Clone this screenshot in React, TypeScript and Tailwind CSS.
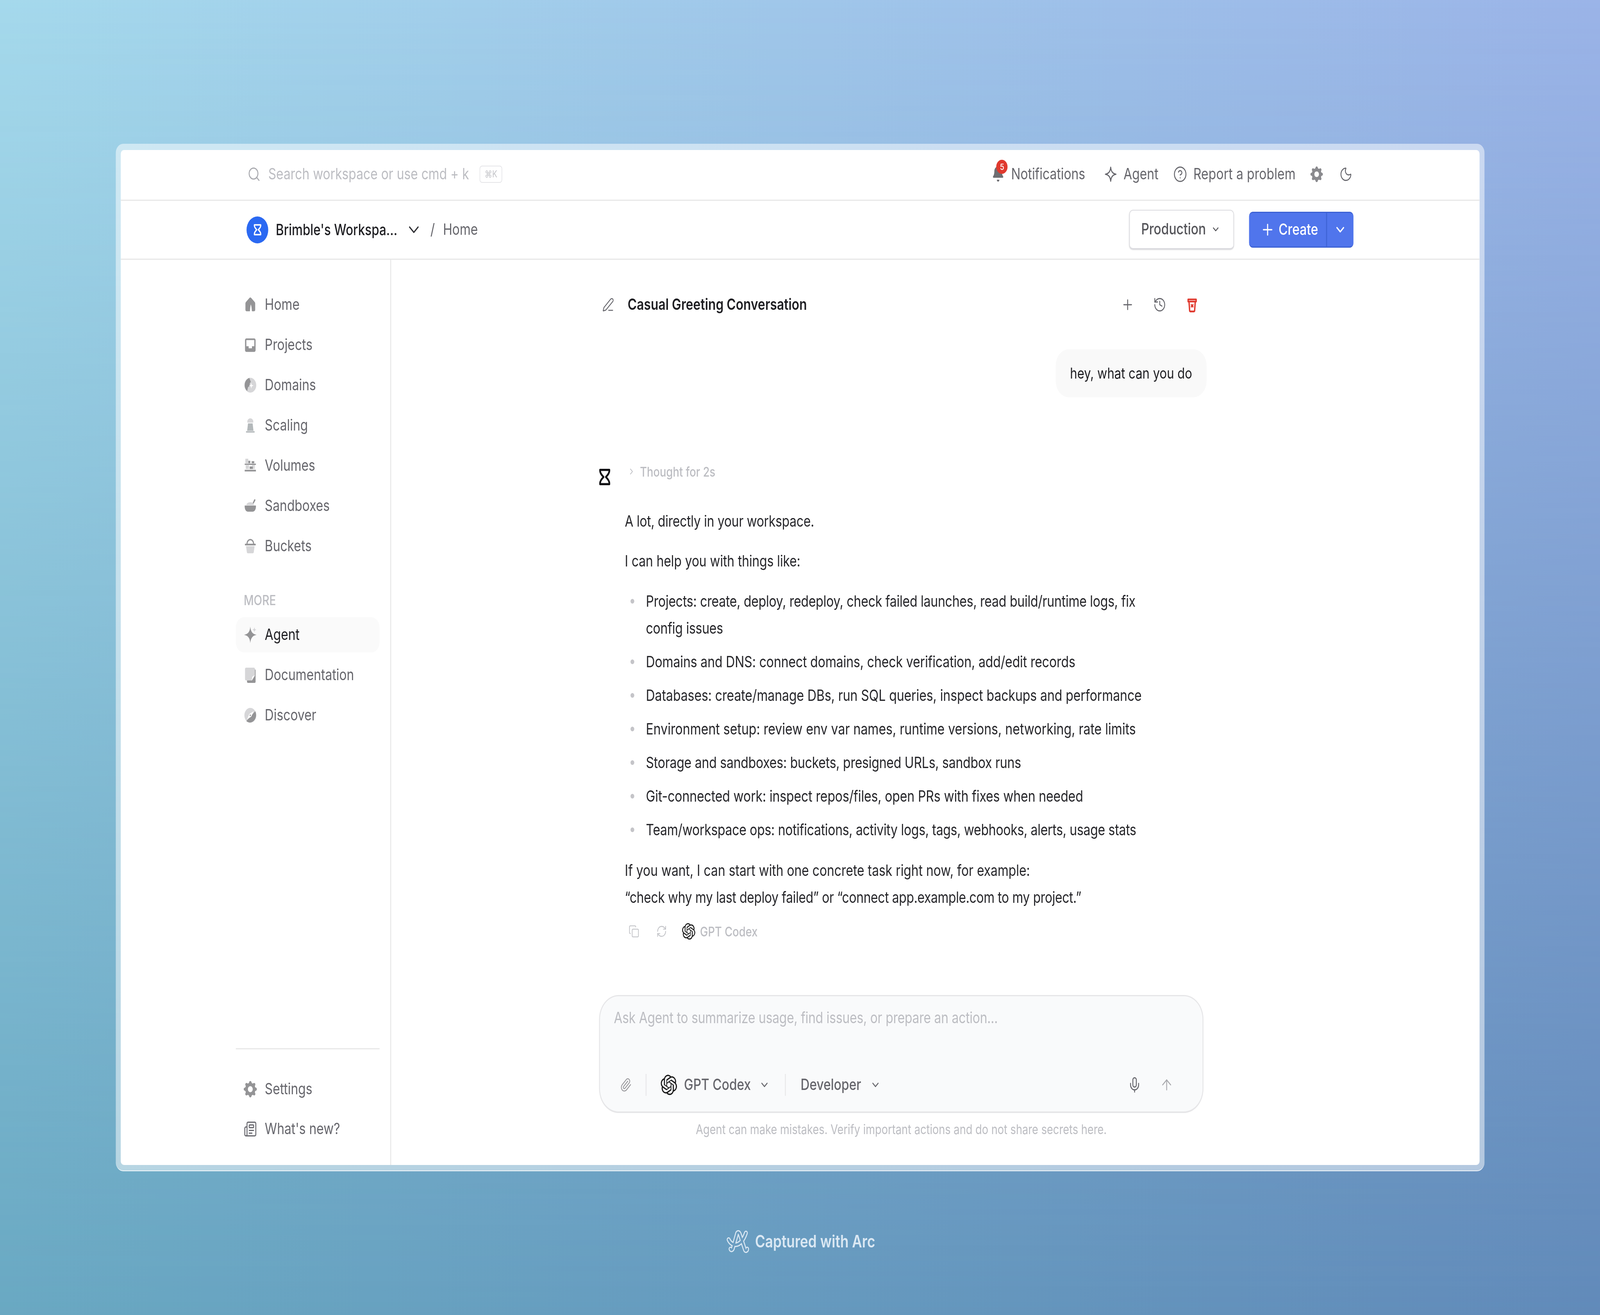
import React from "react";
import { Search, ChevronDown, ChevronRight, Plus, History, CircleHelp, Moon, Newspaper, Copy, RefreshCw, Paperclip, Mic, ArrowUp, PenLine } from "lucide-react";
import { SiOpenai } from "react-icons/si";
import { BsGearFill } from "react-icons/bs";

const D = "#949496";
const L = "#d6d6d8";

const HomeIcon = () => (
  <svg viewBox="0 0 20 20" className="w-[42px] h-[42px]"><path fill={D} d="M10 1.2c.5 0 1 .2 1.5.7l5 4.6c.6.6.9 1.2.9 2.1v7.6c0 1-.8 1.8-1.8 1.8h-2.8c-.3 0-.5-.2-.5-.5-.1-3.3-.6-5.8-1.6-8-.6 2.3-1.1 5-1.2 8 0 .3-.2.5-.5.5H4.400c-1 0-1.800-.8-1.800-1.800V8.600c0-.9.300-1.500.900-2.100l5-4.600c.5-.5 1-.7 1.500-.7z" /></svg>
);
const ProjectsIcon = () => (
  <svg viewBox="0 0 20 20" className="w-[42px] h-[42px]"><rect x="2" y="2" width="16" height="16.500" rx="2.200" fill={D} /><path fill="#fff" d="M4 4h12v7.500h-3.500V14h-5v-2.500H4z" /></svg>
);
const DomainsIcon = () => (
  <svg viewBox="0 0 20 20" className="w-[44px] h-[44px]"><circle cx="10" cy="10" r="9" fill={L} /><path fill={D} d="M8.500 1.200C4.800 2 1.500 5.200 1.500 10c0 3 1.500 5.500 3.800 7l1.200-4.500 2.300-1.500.5-3.500 1.500-1.500z" /><path fill="#fff" d="M11.500 7l.8 2.700 2.700.8-2.700.8-.8 2.700-.8-2.700-2.700-.8 2.700-.8z" /></svg>
);
const ScalingIcon = () => (
  <svg viewBox="0 0 20 20" className="w-[42px] h-[42px]"><path fill={L} d="M5.500 5C5.500 3 8 1.300 10 1.300S14.500 3 14.500 5v1.500h-9z" /><path fill="#b3b8ba" d="M6.500 7.500h7l1.300 9h-9.600zM3.500 17h13v1.700h-13z" /></svg>
);
const VolumesIcon = () => (
  <svg viewBox="0 0 20 20" className="w-[44px] h-[44px]"><path fill={L} d="M2.500 1.500h4.500v5.500H2.500zM3 9.500h5v4.500H3z" /><path fill={D} d="M7 4h3v3H7zM12 4.500h4V7h-4zM9 11h5v3H9zM1.500 7.500h17v1.500h-17zM1.500 15h17v2h-17z" /><path fill="#b9b9bb" d="M12 9h5v5h-3z" opacity=".5" /></svg>
);
const SandboxIcon = () => (
  <svg viewBox="0 0 20 20" className="w-[44px] h-[44px]"><path fill={L} d="M4 9c0-2 3-3.500 6-3.500 1.500 0 3 .3 4 1l2 2.500z" /><path fill={D} d="M1.500 9.500h17c.3 3.500-1 7-4.500 7.500H6C2.500 16.500 1.200 13 1.500 9.500zM13.500 6.500l2.200-4c.3-.6 1.300-.8 1.800-.3.4.400.300 1-.1 1.500L15 7.300z" /></svg>
);
const BucketIcon = () => (
  <svg viewBox="0 0 20 20" className="w-[42px] h-[42px]"><path fill="none" stroke={D} strokeWidth="1.700" d="M5 7.500C5 4 7.500 2 10 2s5 2 5 5.500" /><rect x="1.800" y="7" width="16.400" height="2" rx=".6" fill={D} /><path fill={L} d="M3.500 10h13l-1.300 7.500c-.1.700-.7 1.200-1.500 1.200H6.300c-.8 0-1.400-.5-1.500-1.200z" /></svg>
);
const AgentIcon = () => (
  <svg viewBox="0 0 42 42" className="w-[42px] h-[44px]"><path fill={D} d="M21 0C22.500 13 28 19 41 21 28 23 22.500 29 21 42 19.500 29 14 23 1 21 14 19 19.500 13 21 0z" /><path fill={L} d="M34 1c.6 4.500 2.500 6.400 7 7-4.500.6-6.400 2.500-7 7-.6-4.500-2.500-6.400-7-7 4.500-.6 6.400-2.500 7-7z" /></svg>
);
const DocIcon = () => (
  <svg viewBox="0 0 20 20" className="w-[42px] h-[46px]"><rect x="5" y="3" width="13" height="16.500" rx="1.500" fill={D} /><path fill={L} d="M3.500 1h12c.8 0 1.500.7 1.500 1.500V11l-4.500 5.500h-9c-.8 0-1.500-.7-1.500-1.500V2.500C2 1.700 2.700 1 3.500 1z" /><path fill="#fff" d="M12 17l1-5 3.500-2z" /></svg>
);
const DiscoverIcon = () => (
  <svg viewBox="0 0 20 20" className="w-[42px] h-[46px]"><circle cx="10" cy="10" r="9" fill={L} /><path fill={D} d="M17.500 5c2 3.500 1.600 7.500-1 10.500C13.500 19 8 20 4 17z" /><path fill="#fff" d="M15 5l-3.500 6.500L5 15l3.500-6.500z" /><circle cx="10" cy="10" r="1" fill={D} /></svg>
);
const Hourglass = ({ className, color }: { className: string; color: string }) => (
  <svg viewBox="0 0 20 24" className={className} fill="none"><path stroke={color} strokeWidth="3" strokeLinejoin="round" d="M2 2h16v1.500c0 3-3 6-6 8.500 3 2.500 6 5.500 6 8.500V22H2v-1.500c0-3 3-6 6-8.500-3-2.500-6-5.500-6-8.500z" /></svg>
);
const ArcLogo = () => (
  <svg viewBox="0 0 74 62" className="w-[74px] h-[62px]" fill="none" strokeLinecap="round">
    <path stroke="#dbe8f3" strokeWidth="12" d="M14 50c2 4 7 2 8-3l12-34c1-6 6-7 9-2l17 41c2 4 7 2 7-2" />
    <path stroke="#dbe8f3" strokeWidth="12" d="M8 26c10 18 38 22 55-17" />
    <path stroke="#6b9dc1" strokeWidth="6" d="M14 50c2 4 7 2 8-3l12-34c1-6 6-7 9-2l17 41c2 4 7 2 7-2" />
    <path stroke="#6b9dc1" strokeWidth="6" d="M8 26c10 18 38 22 55-17" />
  </svg>
);

const Item = ({ icon, label, active }: { icon: React.ReactNode; label: string; active?: boolean }) => (
  <div className={`flex h-[90px] items-center rounded-[26px] pl-[25px] ${active ? "bg-[#fafafa] text-[#1e1e22]" : "text-[#66666c]"}`}>
    <div className="flex w-[42px] items-center justify-center">{icon}</div>
    <span className="ml-[25px]">{label}</span>
  </div>
);

const Li = ({ children, className = "" }: { children: React.ReactNode; className?: string }) => (
  <li className={`relative whitespace-nowrap pl-[67px] before:absolute before:left-[18px] before:top-[29px] before:h-[12px] before:w-[12px] before:rounded-full before:bg-[#c4c4c8] ${className}`}>{children}</li>
);

export default function App() {
  return (
    <div className="h-[3366px] w-full overflow-hidden">
      <div className="relative h-[3366px] w-[5088px] origin-top-left scale-x-[0.80503] overflow-hidden bg-[linear-gradient(to_right,#a5d9ec,#9bb4e8)] pl-[368px] pt-[368px] text-[39.5px] [font-family:Inter,'DejaVu_Sans',sans-serif] before:absolute before:inset-0 before:bg-[linear-gradient(to_right,#69a8c2,#618ab9)] before:[mask-image:linear-gradient(to_bottom,transparent,black)]">
        <div className="relative h-[2630px] w-[4353px] rounded-[24px] border-b-[2px] border-b-white/80 bg-white/50 p-[16px]">
          <div className="flex h-[2598px] w-[4321px] flex-col overflow-hidden rounded-[10px] bg-white">
            {/* top bar */}
            <div className="flex h-[130px] shrink-0 items-center justify-between border-b-[3px] border-[#e8e8e8] pb-[3px] pl-[403px] pr-[404px]">
              <div className="flex items-center text-[#bcbdc2]">
                <Search className="h-[42px] w-[42px]" strokeWidth={1.7} color="#a9aaaf" />
                <span className="ml-[24px]">Search workspace or use cmd + k</span>
                <span className="ml-[34px] flex h-[44px] w-[72px] items-center justify-center rounded-[8px] border-[2px] border-[#e5e5e8] text-[24px] text-[#c4c5c9]">⌘K</span>
              </div>
              <div className="flex items-center text-[#66666c]">
                <div className="relative h-[44px] w-[48px]">
                  <svg viewBox="0 0 20 22" className="h-[44px] w-[40px]"><path fill="#6e6e72" d="M10 1c3.500 0 6 2.800 6 6.300 0 3.300.8 5 2 6.500.5.700.2 1.700-.8 1.700H2.800c-1 0-1.300-1-.8-1.700 1.200-1.500 2-3.200 2-6.500C4 3.800 6.500 1 10 1zM8 18h4c0 1.300-.8 2.500-2 2.500S8 19.300 8 18z" /></svg>
                  <span className="absolute left-[14px] top-[-15px] flex h-[36px] w-[36px] items-center justify-center rounded-full bg-[#e0392e] text-[22px] font-medium text-white">5</span>
                </div>
                <span className="ml-[13px]">Notifications</span>
                <svg viewBox="0 0 20 20" className="ml-[60px] h-[46px] w-[42px]" fill="none"><path stroke="#66666c" strokeWidth="1.500" strokeLinejoin="round" d="M10 1.500c.7 5.300 3 7.700 8 8.500-5 .8-7.300 3.200-8 8.500-.7-5.300-3-7.700-8-8.500 5-.8 7.300-3.200 8-8.500z" /></svg>
                <span className="ml-[20px]">Agent</span>
                <CircleHelp className="ml-[47px] h-[44px] w-[44px]" strokeWidth={1.6} color="#66666c" />
                <span className="ml-[20px] tracking-[0.2px]">Report a problem</span>
                <BsGearFill className="ml-[47px] h-[40px] w-[40px] text-[#8a8a8e]" />
                <Moon className="ml-[52px] h-[42px] w-[42px]" strokeWidth={1.6} color="#66666c" />
              </div>
            </div>
            {/* workspace bar */}
            <div className="flex h-[151px] shrink-0 items-center justify-between border-b-[3px] border-[#e8e8e8] pl-[400px] pr-[401px]">
              <div className="flex items-center">
                <div className="flex h-[69px] w-[69px] items-center justify-center rounded-full bg-[#2b69f2]">
                  <Hourglass className="h-[30px] w-[26px]" color="#ffffff" />
                </div>
                <span className="ml-[24px] text-[39px] font-medium text-[#1e1e22]">Brimble's Workspa...</span>
                <ChevronDown className="ml-[25px] h-[54px] w-[54px]" strokeWidth={1.6} color="#303034" />
                <span className="ml-[26px] text-[#66666c]">/</span>
                <span className="ml-[26px] text-[#66666c]">Home</span>
              </div>
              <div className="flex items-center">
                <div className="flex h-[102px] w-[333px] items-center rounded-[12px] border-[2px] border-b-[4px] border-[#dcdce0] pl-[36px] font-medium text-[#55555a] shadow-sm">
                  Production
                  <ChevronDown className="ml-[16px] h-[30px] w-[30px]" strokeWidth={2} color="#55555a" />
                </div>
                <div className="ml-[48px] flex h-[92px] w-[332px] items-center rounded-[12px] border-y-[3px] border-b-[#3d62d4] border-t-[#3d62d4] bg-[#5075ec] font-medium text-white">
                  <Plus className="ml-[36px] h-[46px] w-[46px]" strokeWidth={1.8} />
                  <span className="ml-[12px]">Create</span>
                  <div className="ml-[25px] flex h-full flex-1 items-center justify-center border-l-[3px] border-[#3d62d4]">
                    <ChevronDown className="h-[42px] w-[42px]" strokeWidth={2.2} />
                  </div>
                </div>
              </div>
            </div>
            {/* body */}
            <div className="flex min-h-0 flex-1">
              <aside className="flex w-[860px] shrink-0 flex-col border-r-[3px] border-[#e8e8e8] pb-[47px] pl-[366px] pr-[34px] pt-[70px]">
                <div className="flex flex-col gap-[13px]">
                  <Item icon={<HomeIcon />} label="Home" />
                  <Item icon={<ProjectsIcon />} label="Projects" />
                  <Item icon={<DomainsIcon />} label="Domains" />
                  <Item icon={<ScalingIcon />} label="Scaling" />
                  <Item icon={<VolumesIcon />} label="Volumes" />
                  <Item icon={<SandboxIcon />} label="Sandboxes" />
                  <Item icon={<BucketIcon />} label="Buckets" />
                </div>
                <div className="ml-[25px] mt-[70px] text-[35px] font-medium leading-[46px] text-[#bcbdc2]">MORE</div>
                <div className="mt-[21px] flex flex-col gap-[13px]">
                  <Item icon={<AgentIcon />} label="Agent" active />
                  <Item icon={<DocIcon />} label="Documentation" />
                  <Item icon={<DiscoverIcon />} label="Discover" />
                </div>
                <div className="mt-auto border-t-[3px] border-[#e8e8e8] pt-[57px]">
                  <div className="flex flex-col gap-[12px]">
                    <Item icon={<BsGearFill className="h-[42px] w-[42px] text-[#949496]" />} label="Settings" />
                    <Item icon={<Newspaper className="h-[44px] w-[44px]" strokeWidth={1.7} color="#66666c" />} label="What's new?" />
                  </div>
                </div>
              </aside>
              <main className="flex-1 pl-[661px] pt-[70px]">
                <div className="flex w-[1932px] flex-col">
                  {/* title */}
                  <div className="flex h-[90px] w-[1922px] items-center pl-[10px] pr-[17px]">
                    <PenLine className="h-[38px] w-[38px]" strokeWidth={1.6} color="#66666c" />
                    <span className="ml-[43px] font-semibold text-[#1e1e22]">Casual Greeting Conversation</span>
                    <Plus className="ml-auto h-[42px] w-[42px]" strokeWidth={1.7} color="#66666c" />
                    <History className="ml-[60px] h-[42px] w-[42px]" strokeWidth={1.6} color="#66666c" />
                    <svg viewBox="0 0 20 22" className="ml-[63px] h-[40px] w-[38px]" fill="none"><path stroke="#e0392e" strokeWidth="2.400" strokeLinejoin="round" d="M3 3.500h14v3H3zM4.500 6.500l1.200 13c0 .6.500 1 1 1h6.600c.5 0 1-.4 1-1l1.200-13" /><path stroke="#e0392e" strokeWidth="2" d="M8 10.500l4 4M12 10.500l-4 4" /></svg>
                  </div>
                  {/* bubble */}
                  <div className="mt-[69px] flex h-[123px] items-center self-end rounded-[42px] bg-[#f9f9f9] px-[46px] text-[38.6px] text-[#1e1e22]">hey, what can you do</div>
                  {/* assistant */}
                  <div className="mt-[168px] flex">
                    <div className="w-[82px] shrink-0 pt-[14px]">
                      <Hourglass className="ml-[-3px] h-[44px] w-[42px]" color="#111114" />
                    </div>
                    <div className="flex-1 leading-[69px] text-[#26262a]">
                      <div className="flex h-[44px] items-center pl-[8px] text-[34px] font-medium text-[#bcbdc2]">
                        <ChevronRight className="h-[26px] w-[26px]" strokeWidth={1.8} color="#bcbdc2" />
                        <span className="ml-[14px]">Thought for 2s</span>
                      </div>
                      <p className="mt-[71px] tracking-[-0.3px]">A lot, directly in your workspace.</p>
                      <p className="mt-[33px] tracking-[-0.1px]">I can help you with things like:</p>
                      <ul className="mt-[33px] flex flex-col gap-[17px] text-[39.8px]">
                        <Li className="tracking-[-0.33px]">Projects: create, deploy, redeploy, check failed launches, read build/runtime logs, fix<br />config issues</Li>
                        <Li className="tracking-[-0.18px]">Domains and DNS: connect domains, check verification, add/edit records</Li>
                        <Li className="tracking-[-0.12px]">Databases: create/manage DBs, run SQL queries, inspect backups and performance</Li>
                        <Li>Environment setup: review env var names, runtime versions, networking, rate limits</Li>
                        <Li className="tracking-[-0.32px]">Storage and sandboxes: buckets, presigned URLs, sandbox runs</Li>
                        <Li className="tracking-[-0.18px]">Git-connected work: inspect repos/files, open PRs with fixes when needed</Li>
                        <Li className="tracking-[-0.4px]">Team/workspace ops: notifications, activity logs, tags, webhooks, alerts, usage stats</Li>
                      </ul>
                      <p className="mt-[36px]">If you want, I can start with one concrete task right now, for example:<br /><span className="tracking-[-0.41px]">“check why my last deploy failed” or “connect app.example.com to my project.”</span></p>
                      <div className="mt-[30px] flex h-[44px] items-center pl-[12px] text-[34px] font-medium text-[#bcbdc2]">
                        <Copy className="h-[34px] w-[34px]" strokeWidth={1.7} color="#c4c5c9" />
                        <RefreshCw className="ml-[54px] h-[34px] w-[34px]" strokeWidth={1.7} color="#c4c5c9" />
                        <SiOpenai className="ml-[48px] h-[42px] w-[42px] text-[#1a1a1a]" />
                        <span className="ml-[15px]">GPT Codex</span>
                      </div>
                    </div>
                  </div>
                  {/* composer */}
                  <div className="mt-[141px] flex h-[302px] w-[1922px] flex-col rounded-[62px] border-[3px] border-b-[4px] border-[#e6e6e8] bg-[#f9fafb] pl-[44px] pr-[92px] pt-[30px]">
                    <div className="leading-[50px] tracking-[-0.25px] text-[#bcbdc2]">Ask Agent to summarize usage, find issues, or prepare an action...</div>
                    <div className="mt-[119px] flex h-[56px] items-center font-medium text-[#66666c]">
                      <Paperclip className="ml-[19px] h-[38px] w-[38px]" strokeWidth={1.6} color="#9a9a9e" />
                      <div className="ml-[44px] h-[56px] w-[3px] bg-[#e8e8ea]" />
                      <SiOpenai className="ml-[45px] h-[52px] w-[52px] text-[#1a1a1a]" />
                      <span className="ml-[22px]">GPT Codex</span>
                      <ChevronDown className="ml-[26px] h-[34px] w-[34px]" strokeWidth={2} color="#66666c" />
                      <div className="ml-[48px] h-[56px] w-[3px] bg-[#e8e8ea]" />
                      <span className="ml-[47px]">Developer</span>
                      <ChevronDown className="ml-[28px] h-[34px] w-[34px]" strokeWidth={2} color="#66666c" />
                      <Mic className="ml-auto h-[44px] w-[44px]" strokeWidth={1.6} color="#66666c" />
                      <ArrowUp className="ml-[58px] h-[44px] w-[44px]" strokeWidth={1.5} color="#a8a9ad" />
                    </div>
                  </div>
                  <div className="mt-[19px] w-[1922px] text-center text-[33.8px] leading-[46px] text-[#bcbdc2]">Agent can make mistakes. Verify important actions and do not share secrets here.</div>
                </div>
              </main>
            </div>
          </div>
        </div>
        {/* footer */}
        <div className="relative ml-[1941px] mt-[147px] flex items-center whitespace-nowrap text-[43.7px] font-semibold text-[#dbe8f3]">
          <ArcLogo />
          <span className="ml-[18px]">Captured with Arc</span>
        </div>
      </div>
    </div>
  );
}
